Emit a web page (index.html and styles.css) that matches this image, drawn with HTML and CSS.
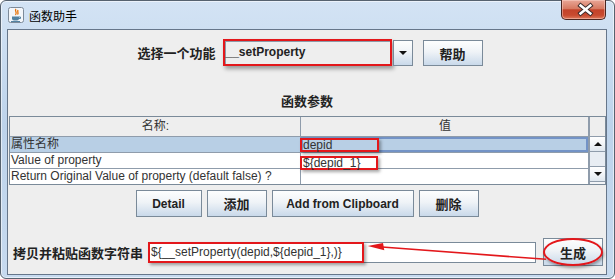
FILE: index.html
```html
<!DOCTYPE html>
<html lang="zh">
  <head>
    <meta charset="UTF-8" />
    <title>函数助手</title>
    <link rel="stylesheet" href="styles.css">
  </head>
  <body>
    <div class="window">
      <div class="titlebar">
        <svg class="appicon" viewBox="0 0 16 16">
          <rect x="0.5" y="0.5" width="15" height="15" rx="2" fill="#f3f6fa" stroke="#7d8a99" />
          <path d="M8 2 C6 4 10 5 7.5 8 M10 3 C9 5 11 6 9.5 7.5" fill="none" stroke="#e76f00" stroke-width="1.3" />
          <path d="M4 9.5 H11 V11.5 A2 2 0 0 1 9 13.5 H6 A2 2 0 0 1 4 11.5 Z" fill="#5382a1" />
          <path d="M11 10 H12.5 V11.5 H11" fill="none" stroke="#5382a1" />
          <path d="M3 14.5 H12" stroke="#5382a1" />
        </svg>
        <span class="title">函数助手</span>
        <div class="close">
          <svg viewBox="0 0 44 19">
            <path d="M19 5.5 L29 13.5 M29 5.5 L19 13.5" stroke="#3b2b2b" stroke-width="4.6" stroke-linecap="square" />
            <path d="M19 5.5 L29 13.5 M29 5.5 L19 13.5" stroke="#ffffff" stroke-width="2.6" stroke-linecap="square" />
          </svg>
        </div>
      </div>

      <div class="client">
        <div class="pickrow">
          <span class="label">选择一个功能</span>
          <div class="combo">__setProperty</div>
          <div class="combo-arrow"><span class="tri-down"></span></div>
          <button class="btn help">帮助</button>
        </div>

        <div class="section-title">函数参数</div>

        <div class="scrollpane">
          <div class="table">
            <div class="row head">
              <div class="c1">名称:</div>
              <div class="c2">值</div>
            </div>
            <div class="row selected">
              <div class="c1">属性名称</div>
              <div class="c2 focus"><span class="mark">depid</span></div>
            </div>
            <div class="row">
              <div class="c1">Value of property</div>
              <div class="c2"><span class="mark low">${depid_1}</span></div>
            </div>
            <div class="row">
              <div class="c1">Return Original Value of property (default false) ?</div>
              <div class="c2"></div>
            </div>
          </div>
          <div class="vbar">
            <div class="corner"></div>
            <div class="arrowbtn"><span class="tri-up"></span></div>
            <div class="thumb"></div>
            <div class="arrowbtn"><span class="tri-down"></span></div>
          </div>
        </div>

        <div class="actions">
          <button class="btn w66">Detail</button>
          <button class="btn w60">添加</button>
          <button class="btn w142">Add from Clipboard</button>
          <button class="btn w60">删除</button>
        </div>

        <div class="outrow">
          <span class="label">拷贝并粘贴函数字符串</span>
          <div class="field"><span class="mark">${__setProperty(depid,${depid_1},)}</span></div>
          <button class="btn gen">生成</button>
        </div>
      </div>

      <!-- annotation arrow -->
      <svg class="arrow" viewBox="0 0 190 30">
        <path d="M21 11 L185 23.3" stroke="#e3171b" stroke-width="1.6" />
        <polygon points="6.7,10 22,7 23.3,14.2" fill="#e3171b" />
      </svg>
    </div>
  </body>
</html>
```

FILE: styles.css
```css
* {
  box-sizing: border-box;
}

body {
  margin: 0;
  background: #ffffff;
  font-family: "Liberation Sans", "Noto Sans CJK SC", sans-serif;
  font-size: 12px;
  color: #333;
}

.window {
  position: relative;
  width: 615px;
  height: 279px;
  padding: 0 7px 3px 6px;
  border: 1px solid #56626f;
  border-radius: 6px;
  background: linear-gradient(to bottom, #d3e3f4, #bdd3eb 45%, #c7daef);
  box-shadow: inset 0 0 0 1px rgba(255, 255, 255, 0.55);
}

/* title bar */
.titlebar {
  display: flex;
  align-items: flex-start;
  height: 28px;
  margin: 0 -7px 0 -6px;
}

.appicon {
  width: 16px;
  height: 16px;
  margin: 6px 0 0 7px;
}

.title {
  margin: 6px 0 0 5px;
  font-family: "Noto Sans CJK SC", sans-serif;
  font-size: 12px;
  line-height: 17px;
  color: #000;
}

.close {
  width: 45px;
  height: 20px;
  margin: -1px 8px 0 auto;
  border: 1px solid #4a2620;
  border-top: none;
  border-radius: 0 0 5px 5px;
  background: linear-gradient(to bottom, #e9a797, #d77a62 45%, #c3432a 52%, #c84a2f 80%, #dd7a5c);
  box-shadow: inset 0 0 0 1px rgba(255, 220, 210, 0.45);
}

.close svg {
  display: block;
  width: 43px;
  height: 19px;
}

/* client area */
.client {
  height: 246px;
  border: 1px solid #66768a;
  background: #eeeeee;
  padding-top: 9px;
}

.label {
  font-family: "Noto Sans CJK SC", sans-serif;
  font-weight: bold;
  font-size: 13px;
  color: #222;
}

.btn {
  height: 26px;
  padding: 0;
  border: 1px solid #7a8a99;
  background: linear-gradient(to bottom, #fdfefe, #eff3f7 45%, #c9d9ea);
  font-family: "Liberation Sans", "Noto Sans CJK SC", sans-serif;
  font-weight: bold;
  font-size: 12px;
  color: #222;
}

.pickrow {
  display: flex;
  justify-content: center;
  align-items: flex-end;
  height: 27px;
  padding-left: 6px;
}

.pickrow .label {
  align-self: center;
  margin-right: 7px;
}

.combo {
  width: 169px;
  height: 27px;
  padding-left: 1px;
  border: 2px solid #e3171b;
  background: #eeeeee;
  box-shadow: inset 1px 1px 0 #8d9aa8, 2px 3px 4px rgba(0, 0, 0, 0.35);
  font-weight: bold;
  line-height: 23px;
  color: #222;
}

.combo-arrow {
  display: grid;
  place-items: center;
  width: 20px;
  height: 26px;
  margin-left: 1px;
  border: 1px solid #7a8a99;
  background: linear-gradient(to bottom, #fdfefe, #eff3f7 45%, #c9d9ea);
}

.tri-down,
.tri-up {
  width: 0;
  height: 0;
  border-left: 4px solid transparent;
  border-right: 4px solid transparent;
}

.tri-down {
  border-top: 4px solid #111;
}

.tri-up {
  border-bottom: 4px solid #111;
}

.help {
  width: 60px;
  margin-left: 10px;
  font-size: 13px;
}

.section-title {
  margin-top: 27px;
  height: 16px;
  line-height: 16px;
  text-align: center;
  font-family: "Noto Sans CJK SC", sans-serif;
  font-weight: bold;
  font-size: 13px;
  color: #222;
}

/* parameter table */
.scrollpane {
  display: flex;
  height: 69px;
  margin: 7px 0 0 1px;
  border: 1px solid #7a8a99;
  background: #ffffff;
  overflow: hidden;
}

.table {
  flex: 1;
}

.row {
  display: flex;
  height: 16px;
  border-bottom: 1px solid #8f9cab;
}

.row .c1 {
  width: 291px;
  border-right: 1px solid #8f9cab;
}

.row .c2 {
  flex: 1;
  display: flex;
  align-items: center;
  border-right: 1px solid #8f9cab;
}

.row .c1,
.row .c2 {
  padding-left: 1px;
  line-height: 15px;
  white-space: nowrap;
  overflow: visible;
}

.row.head {
  height: 20px;
  background: #eeeeee;
}

.row.head .c1,
.row.head .c2 {
  justify-content: center;
  text-align: center;
  line-height: 19px;
}

.row.selected {
  background: #b8cfe5;
}

.row .focus {
  box-shadow: inset 0 0 0 2px #7393c6;
}

.mark {
  display: inline-block;
  position: relative;
  height: 14px;
  margin-left: -2px;
  padding-left: 1px;
  border: 2px solid #e3171b;
  box-shadow: 2px 2px 3px rgba(0, 0, 0, 0.35);
  line-height: 10px;
}

.c2 .mark {
  width: 79px;
}

.c2 .mark.low {
  width: 78px;
  margin-top: 4px;
}

.vbar {
  width: 16px;
  border-left: 1px solid #8f9cab;
  background: #f2f4f7;
}

.corner {
  height: 20px;
  background: #eeeeee;
  border-bottom: 1px solid #8f9cab;
}

.arrowbtn {
  display: grid;
  place-items: center;
  height: 15px;
  border-bottom: 1px solid #8f9cab;
  background: linear-gradient(to bottom, #ffffff, #eef2f6 60%, #dfe7ef);
}

.thumb {
  height: 15px;
  border-bottom: 1px solid #8f9cab;
  background: #e8edf3;
}

/* buttons row */
.actions {
  display: flex;
  justify-content: center;
  gap: 5px;
  margin-top: 5px;
}

.actions .btn {
  height: 27px;
}

.w66 {
  width: 66px;
}

.w60 {
  width: 60px;
  font-size: 13px;
}

.w142 {
  width: 142px;
}

/* output row */
.outrow {
  display: flex;
  align-items: center;
  height: 28px;
  margin-top: 21px;
  padding: 0 3px 0 5px;
}

.outrow .label {
  margin-right: 5px;
}

.field {
  flex: 1;
  height: 21px;
  border: 1px solid #7a8a99;
  background: #ffffff;
}

.field .mark {
  width: 216px;
  height: 21px;
  margin: -1px 0 0 -1px;
  padding-left: 1px;
  line-height: 17px;
}

.gen {
  position: relative;
  width: 60px;
  height: 28px;
  margin-left: 7px;
  font-size: 13px;
}

.gen::after {
  content: "";
  position: absolute;
  inset: -1px;
  border: 2px solid #e3171b;
  border-radius: 50%;
  box-shadow: 1px 2px 3px rgba(0, 0, 0, 0.35);
}

.arrow {
  position: absolute;
  left: 360px;
  top: 235px;
  width: 190px;
  height: 30px;
}
```
